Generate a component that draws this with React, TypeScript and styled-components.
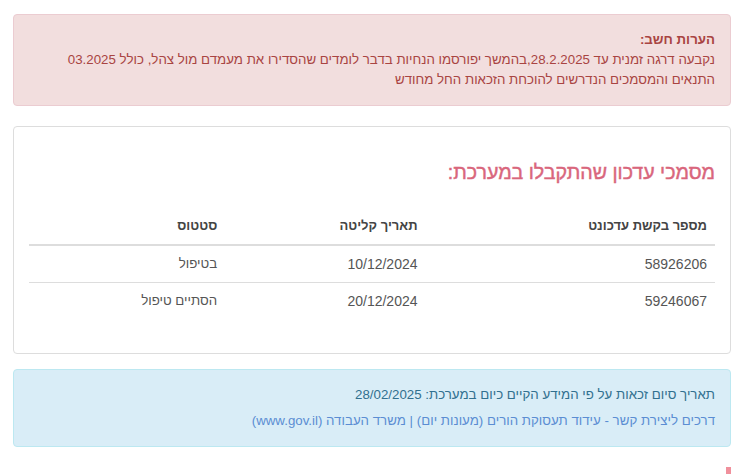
import React from 'react'
import styled, { createGlobalStyle } from 'styled-components'

const GlobalStyle = createGlobalStyle`
    html, body {
        margin: 0;
        padding: 0;
        background: #fff;
    }
    body {
        font-family: 'Liberation Sans', Arial, sans-serif;
        font-size: 13.3px;
        line-height: 20px;
        color: #333;
    }
`

const Page = styled.div`
    direction: rtl;
    padding: 14px 16px 0 13px;
    width: 718px;
`

const Alert = styled.div<{ type: 'danger' | 'info' }>`
    padding: 15px;
    border: 1px solid ${(props) => (props.type === 'danger' ? '#ebccd1' : '#bce8f1')};
    background-color: ${(props) => (props.type === 'danger' ? '#f2dede' : '#d9edf7')};
    color: ${(props) => (props.type === 'danger' ? '#a94442' : '#31708f')};
    border-radius: 4px;
    margin-bottom: ${(props) => (props.type === 'danger' ? '20px' : '0')};
`

const AlertTitle = styled.strong`
    display: block;
`

const InfoLine = styled.p`
    margin: 0 0 6px;
`

const InfoLink = styled.a`
    color: #5b8dd3;
    text-decoration: none;
`

const Panel = styled.div`
    border: 1px solid #ddd;
    border-radius: 4px;
    padding: 33px 15px 34px;
    margin-bottom: 15px;
`

const Heading = styled.h3`
    margin: 0 0 24px;
    font-size: 19.6px;
    line-height: 24px;
    font-weight: normal;
    color: #d9667c;
    -webkit-text-stroke: 0.45px #d9667c;
`

const Table = styled.table`
    width: 100%;
    border-collapse: collapse;
    border-spacing: 0;
`

const Th = styled.th<{ w: string }>`
    width: ${(props) => props.w};
    text-align: right;
    padding: 8px;
    font-size: 13px;
    font-weight: bold;
    color: #444;
    border-bottom: 2px solid #ddd;
`

const Td = styled.td<{ first?: boolean; text?: boolean }>`
    text-align: right;
    padding: 8px;
    font-size: ${(props) => (props.text ? '13.3px' : '14px')};
    color: #555;
    border-top: ${(props) => (props.first ? 'none' : '1px solid #ddd')};
`

const Mark = styled.div`
    width: 5px;
    height: 7px;
    background: #f0909c;
    margin-top: 20px;
`

const rows = [
    { id: '58926206', date: '10/12/2024', status: 'בטיפול' },
    { id: '59246067', date: '20/12/2024', status: 'הסתיים טיפול' },
]

const App = () => {
    return (
        <>
            <GlobalStyle />
            <Page>
                <Alert type='danger'>
                    <AlertTitle>הערות חשב:</AlertTitle>
                    נקבעה דרגה זמנית עד 28.2.2025,בהמשך יפורסמו הנחיות בדבר לומדים שהסדירו את מעמדם מול צהל, כולל 03.2025
                    התנאים והמסמכים הנדרשים להוכחת הזכאות החל מחודש
                </Alert>
                <Panel>
                    <Heading>מסמכי עדכון שהתקבלו במערכת:</Heading>
                    <Table>
                        <thead>
                            <tr>
                                <Th w='42.2%'>מספר בקשת עדכונט</Th>
                                <Th w='29.2%'>תאריך קליטה</Th>
                                <Th w='28.6%'>סטטוס</Th>
                            </tr>
                        </thead>
                        <tbody>
                            {rows.map((row, i) => (
                                <tr key={row.id}>
                                    <Td first={i === 0}>{row.id}</Td>
                                    <Td first={i === 0}>{row.date}</Td>
                                    <Td first={i === 0} text>{row.status}</Td>
                                </tr>
                            ))}
                        </tbody>
                    </Table>
                </Panel>
                <Alert type='info'>
                    <InfoLine>תאריך סיום זכאות על פי המידע הקיים כיום במערכת: 28/02/2025</InfoLine>
                    <InfoLink href='#'>דרכים ליצירת קשר - עידוד תעסוקת הורים (מעונות יום) | משרד העבודה (www.gov.il)</InfoLink>
                </Alert>
                <Mark />
            </Page>
        </>
    )
}

export default App
